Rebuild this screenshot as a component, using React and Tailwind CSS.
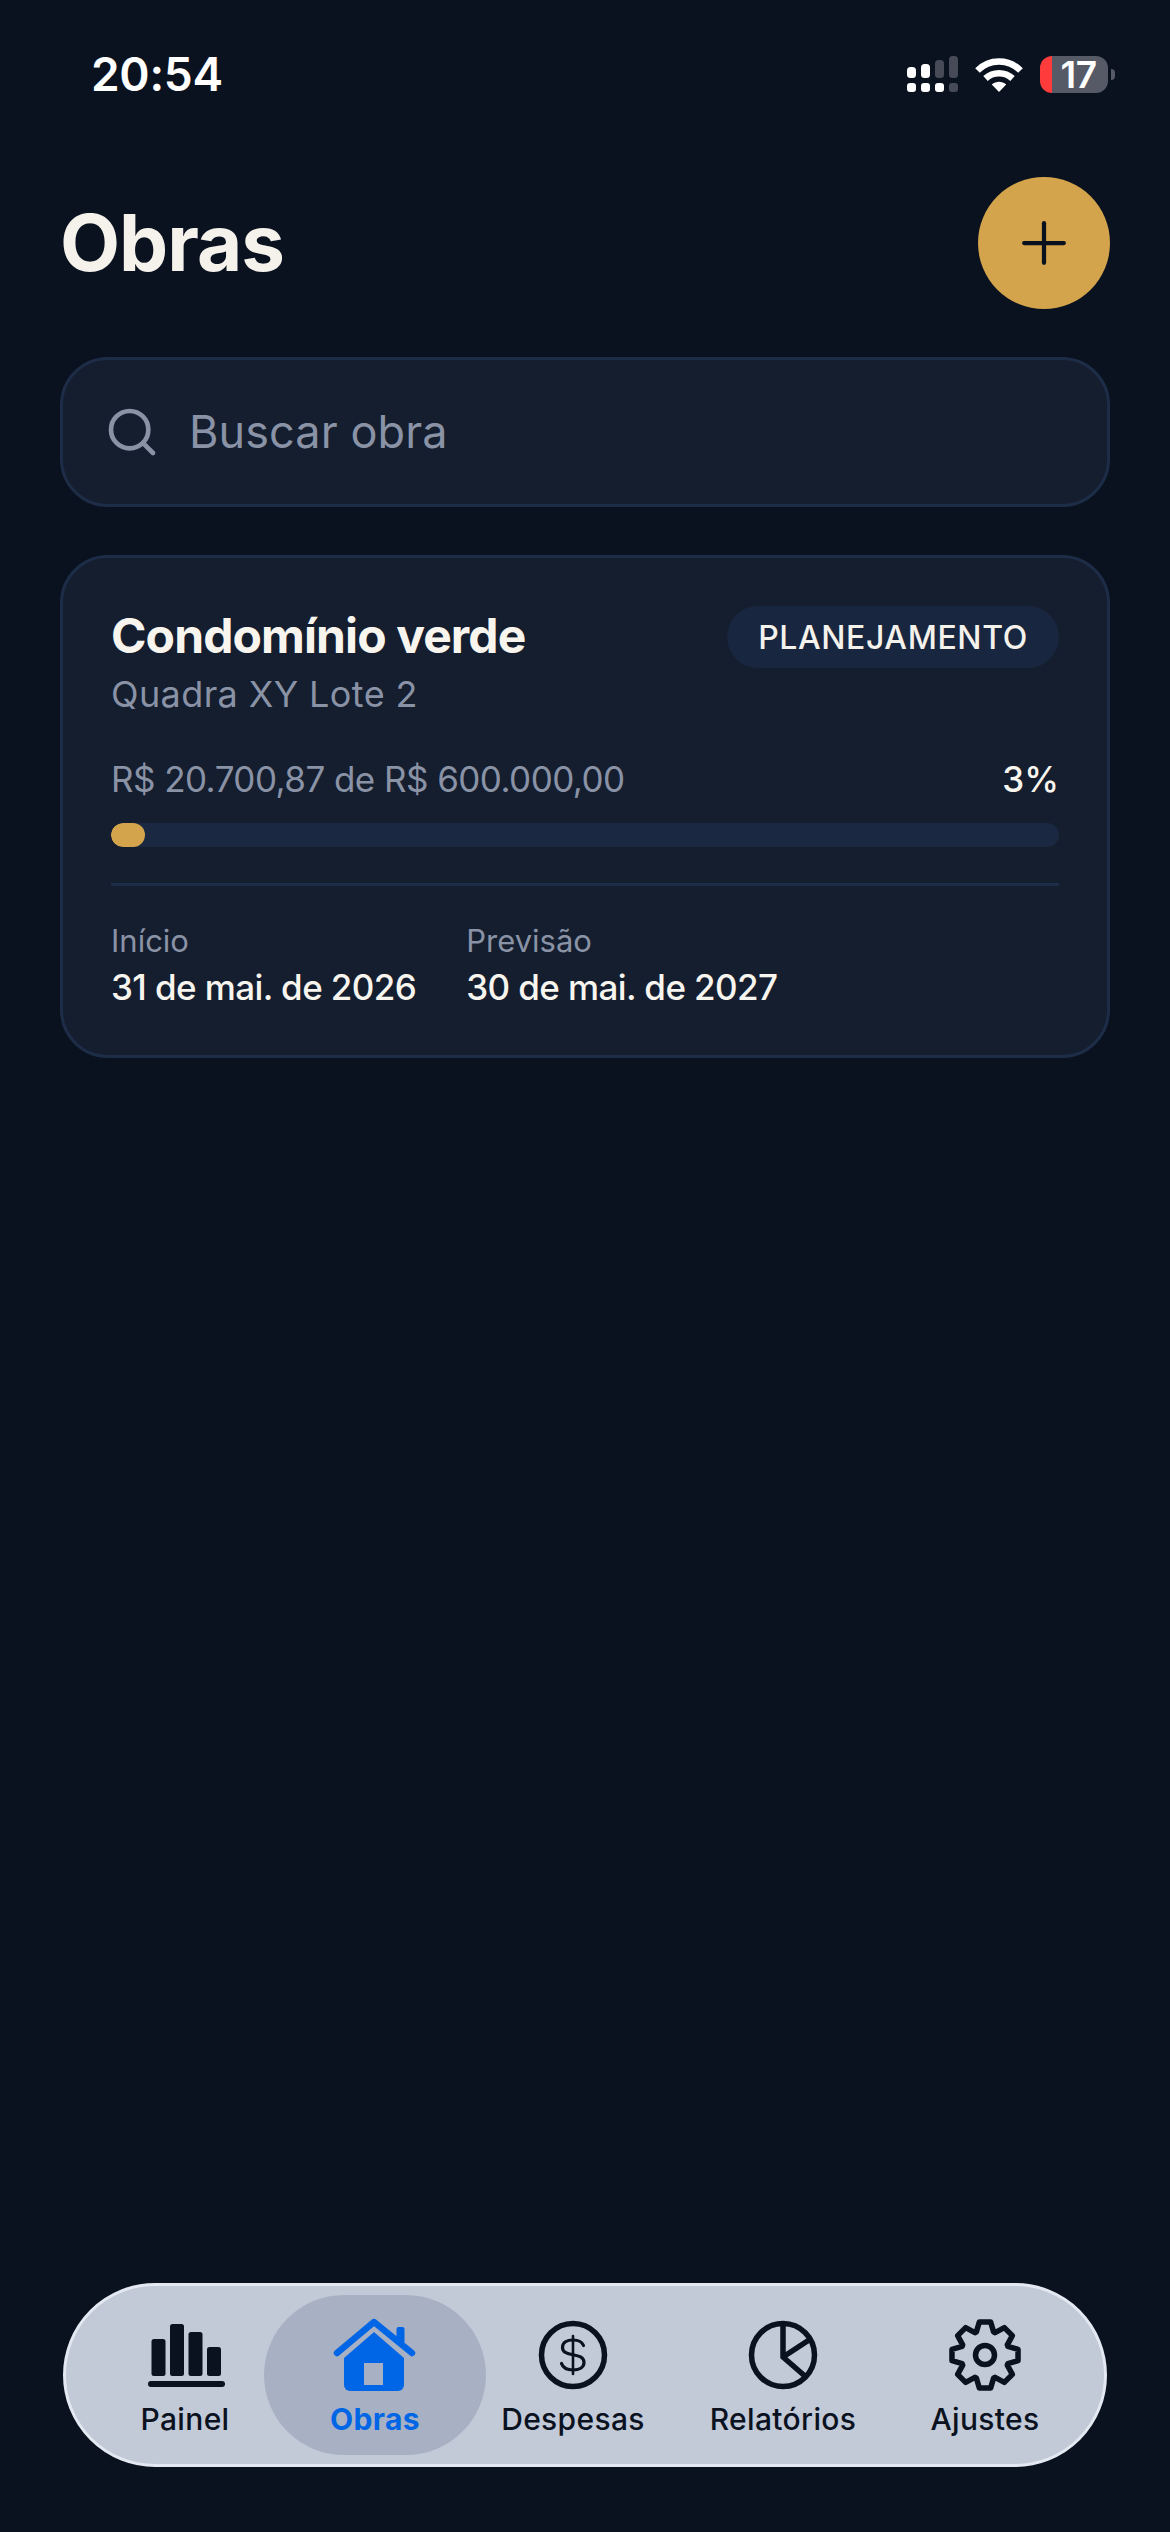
import React from "react";
import { Search, Plus } from "lucide-react";

const Signal = () => (
  <svg width="52" height="37" viewBox="0 0 52 37" fill="#fff">
    <rect x="0" y="11" width="9" height="11" rx="3.5" />
    <rect x="14" y="8" width="9" height="14" rx="3.5" />
    <rect x="28" y="4" width="9" height="18" rx="3.5" fill="#474b58" />
    <rect x="42" y="0" width="9" height="22" rx="3.5" fill="#474b58" />
    <rect x="0" y="27" width="9" height="9" rx="3" />
    <rect x="14" y="27" width="9" height="9" rx="3" />
    <rect x="28" y="27" width="9" height="9" rx="3" />
    <rect x="42" y="27" width="9" height="9" rx="3" fill="#474b58" />
  </svg>
);

const Wifi = () => (
  <svg width="48" height="36" viewBox="0 0 48 36" fill="none" stroke="#fff" strokeWidth="6.5">
    <path d="M2.5 13.5C14.5 1.5 33.5 1.5 45.5 13.5" />
    <path d="M10.5 21.5C18 14.5 30 14.5 37.5 21.5" />
    <path d="M16.8 27.5L24 35L31.2 27.5C27 23.8 21 23.8 16.8 27.5Z" fill="#fff" stroke="none" />
  </svg>
);

const Painel = () => (
  <svg width="84" height="84" viewBox="0 0 84 84" fill="#0a111f">
    <rect x="8.5" y="26" width="14" height="37" rx="2.5" />
    <rect x="27" y="11" width="14" height="52" rx="2.5" />
    <rect x="45.5" y="19" width="14" height="44" rx="2.5" />
    <rect x="64" y="34" width="14" height="29" rx="2.5" />
    <rect x="5" y="68" width="77" height="6" rx="3" />
  </svg>
);

const Casa = () => (
  <svg width="84" height="84" viewBox="0 0 84 84" fill="#0066e6">
    <rect x="63.5" y="14" width="8" height="17" rx="2" />
    <path d="M4 40L41 9L79 40" fill="none" stroke="#0066e6" strokeWidth="6.5" strokeLinecap="round" strokeLinejoin="round" />
    <path d="M41 19L71 45V72a6 6 0 0 1-6 6H17a6 6 0 0 1-6-6V45Z" />
    <rect x="31" y="50" width="19" height="22" fill="#a8b1c3" />
  </svg>
);

const Dinheiro = () => (
  <svg width="84" height="84" viewBox="0 0 84 84" fill="none" stroke="#0a111f" strokeLinecap="round">
    <circle cx="42" cy="42" r="31.5" strokeWidth="5.5" />
    <path d="M42 23V61" strokeWidth="2.6" />
    <path d="M52.5 32.5C51 28.5 47 27 42 27C36 27 31.5 29.5 31.5 34.5C31.5 45 53 38.5 53 49.5C53 54.5 48 57 42 57C36.5 57 32 55 30.5 50.5" strokeWidth="3.2" />
  </svg>
);

const Pizza = () => (
  <svg width="84" height="84" viewBox="0 0 84 84" fill="none" stroke="#0a111f" strokeWidth="5.5" strokeLinejoin="round">
    <circle cx="42" cy="42" r="31.5" />
    <path d="M42 11V44L68 27M42 44L65 64" />
  </svg>
);

const dentes = (() => {
  const ponto = (r, a) => `${(42 + r * Math.sin(a)).toFixed(2)} ${(42 - r * Math.cos(a)).toFixed(2)}`;
  const partes = [];
  for (let i = 0; i < 8; i++) {
    const a = (i * Math.PI) / 4;
    partes.push(ponto(24.5, a - 0.36), ponto(33.5, a - 0.17), ponto(33.5, a + 0.17), ponto(24.5, a + 0.36));
  }
  return "M" + partes.join("L") + "Z";
})();

const Engrenagem = () => (
  <svg width="84" height="84" viewBox="0 0 84 84" fill="none" stroke="#0a111f" strokeWidth="5.5" strokeLinejoin="round">
    <path d={dentes} />
    <circle cx="42" cy="42" r="9.5" />
  </svg>
);

const itens = [
  { rotulo: "Painel", Icone: Painel, largura: "w-[158px]" },
  { rotulo: "Obras", Icone: Casa, largura: "w-[222px]", ativo: true },
  { rotulo: "Despesas", Icone: Dinheiro, largura: "w-[174px]" },
  { rotulo: "Relatórios", Icone: Pizza, largura: "w-[246px]" },
  { rotulo: "Ajustes", Icone: Engrenagem, largura: "w-[158px]" },
];

export default function App() {
  return (
    <div className="h-[2532px] w-[1170px] bg-[#0a121f] flex flex-col font-['Inter',sans-serif] text-white overflow-hidden">
      <div className="flex items-center justify-between pt-[56px] pl-[91px] pr-[55px] h-[93px]">
        <span className="text-[46px] leading-[37px] font-semibold tracking-[-0.3px]">20:54</span>
        <div className="flex items-center">
          <Signal />
          <div className="ml-[16px]"><Wifi /></div>
          <div className="ml-[17px] flex items-center">
            <div className="w-[68px] h-[37px] flex">
              <div className="w-[12px] bg-[#ff3b3b] rounded-l-[12px]" />
              <div className="flex-1 bg-[#565a66] rounded-r-[12px] flex items-center justify-center pr-[3px] text-[37px] leading-[37px] font-semibold tracking-[-0.4px]">17</div>
            </div>
            <div className="ml-[3px] w-[4px] h-[11px] rounded-r-full bg-[#565a66]" />
          </div>
        </div>
      </div>

      <div className="flex items-center justify-between mt-[84px] pl-[60px] pr-[60px]">
        <h1 className="text-[78px] leading-[92px] font-bold tracking-[-1px] text-[#f5f2ec]">Obras</h1>
        <button className="w-[132px] h-[132px] rounded-full bg-[#d4a44c] flex items-center justify-center">
          <Plus size={68} strokeWidth={1.5} color="#0a111e" />
        </button>
      </div>

      <div className="mt-[48px] mx-[60px] h-[150px] rounded-[48px] border-[3px] border-[#1e2d47] bg-[#141e2f] flex items-center pl-[41px]">
        <Search size={56} strokeWidth={2} color="#8a92a6" />
        <span className="ml-[29px] text-[45px] leading-[54px] tracking-[0.1px] text-[#8a92a6]">Buscar obra</span>
      </div>

      <div className="mt-[48px] mx-[60px] h-[503px] rounded-[48px] border-[3px] border-[#1e2d47] bg-[#141e2f] px-[48px] pt-[48px]">
        <div className="flex items-start justify-between">
          <div>
            <div className="text-[48px] leading-[60px] font-bold tracking-[-0.9px] text-[#f8f5ef]">Condomínio verde</div>
            <div className="text-[36px] leading-[48px] tracking-[0.4px] text-[#8a92a6] mt-[4px]">Quadra XY Lote 2</div>
          </div>
          <div className="h-[62px] w-[332px] rounded-full bg-[#18263f] flex items-center justify-center text-[32px] leading-[65px] font-[550] tracking-[0.6px] text-[#f5f2ec]">PLANEJAMENTO</div>
        </div>
        <div className="flex items-center justify-between mt-[38px] text-[35px] leading-[46px]">
          <span className="text-[#8a92a6] tracking-[-0.55px]">R$ 20.700,87 de R$ 600.000,00</span>
          <span className="font-[550] text-[#f8f5ef]">3%</span>
        </div>
        <div className="mt-[21px] h-[24px] rounded-full bg-[#1a2841] overflow-hidden">
          <div className="h-full w-[34px] rounded-full bg-[#d4a44c]" />
        </div>
        <div className="mt-[36px] h-[3px] bg-[#1e2d47]" />
        <div className="flex mt-[34px] gap-[50px]">
          <div>
            <div className="text-[31px] leading-[42px] text-[#8a92a6]">Início</div>
            <div className="text-[35px] leading-[46px] font-medium tracking-[-0.6px] text-[#f8f5ef] mt-[2px]">31 de mai. de 2026</div>
          </div>
          <div>
            <div className="text-[31px] leading-[42px] text-[#8a92a6]">Previsão</div>
            <div className="text-[35px] leading-[46px] font-medium tracking-[-0.6px] text-[#f8f5ef] mt-[2px]">30 de mai. de 2027</div>
          </div>
        </div>
      </div>

      <nav className="mt-auto mb-[65px] mx-[63px] h-[184px] rounded-[92px] border-[3px] border-[#e4e9f1] bg-[#c2c9d7] flex items-center pl-[40px]">
        {itens.map(({ rotulo, Icone, largura, ativo }) => (
          <div key={rotulo} className={`${largura} h-[160px] flex flex-col items-center justify-center shrink-0 ${ativo ? "bg-[#a8b1c3] rounded-[80px]" : ""}`}>
            <Icone />
            <span className={`text-[30px] leading-[38px] mt-[3px] tracking-[0.35px] ${ativo ? "font-bold text-[#0066e6]" : "font-[450] text-[#0a111f]"}`}>{rotulo}</span>
          </div>
        ))}
      </nav>
    </div>
  );
}
